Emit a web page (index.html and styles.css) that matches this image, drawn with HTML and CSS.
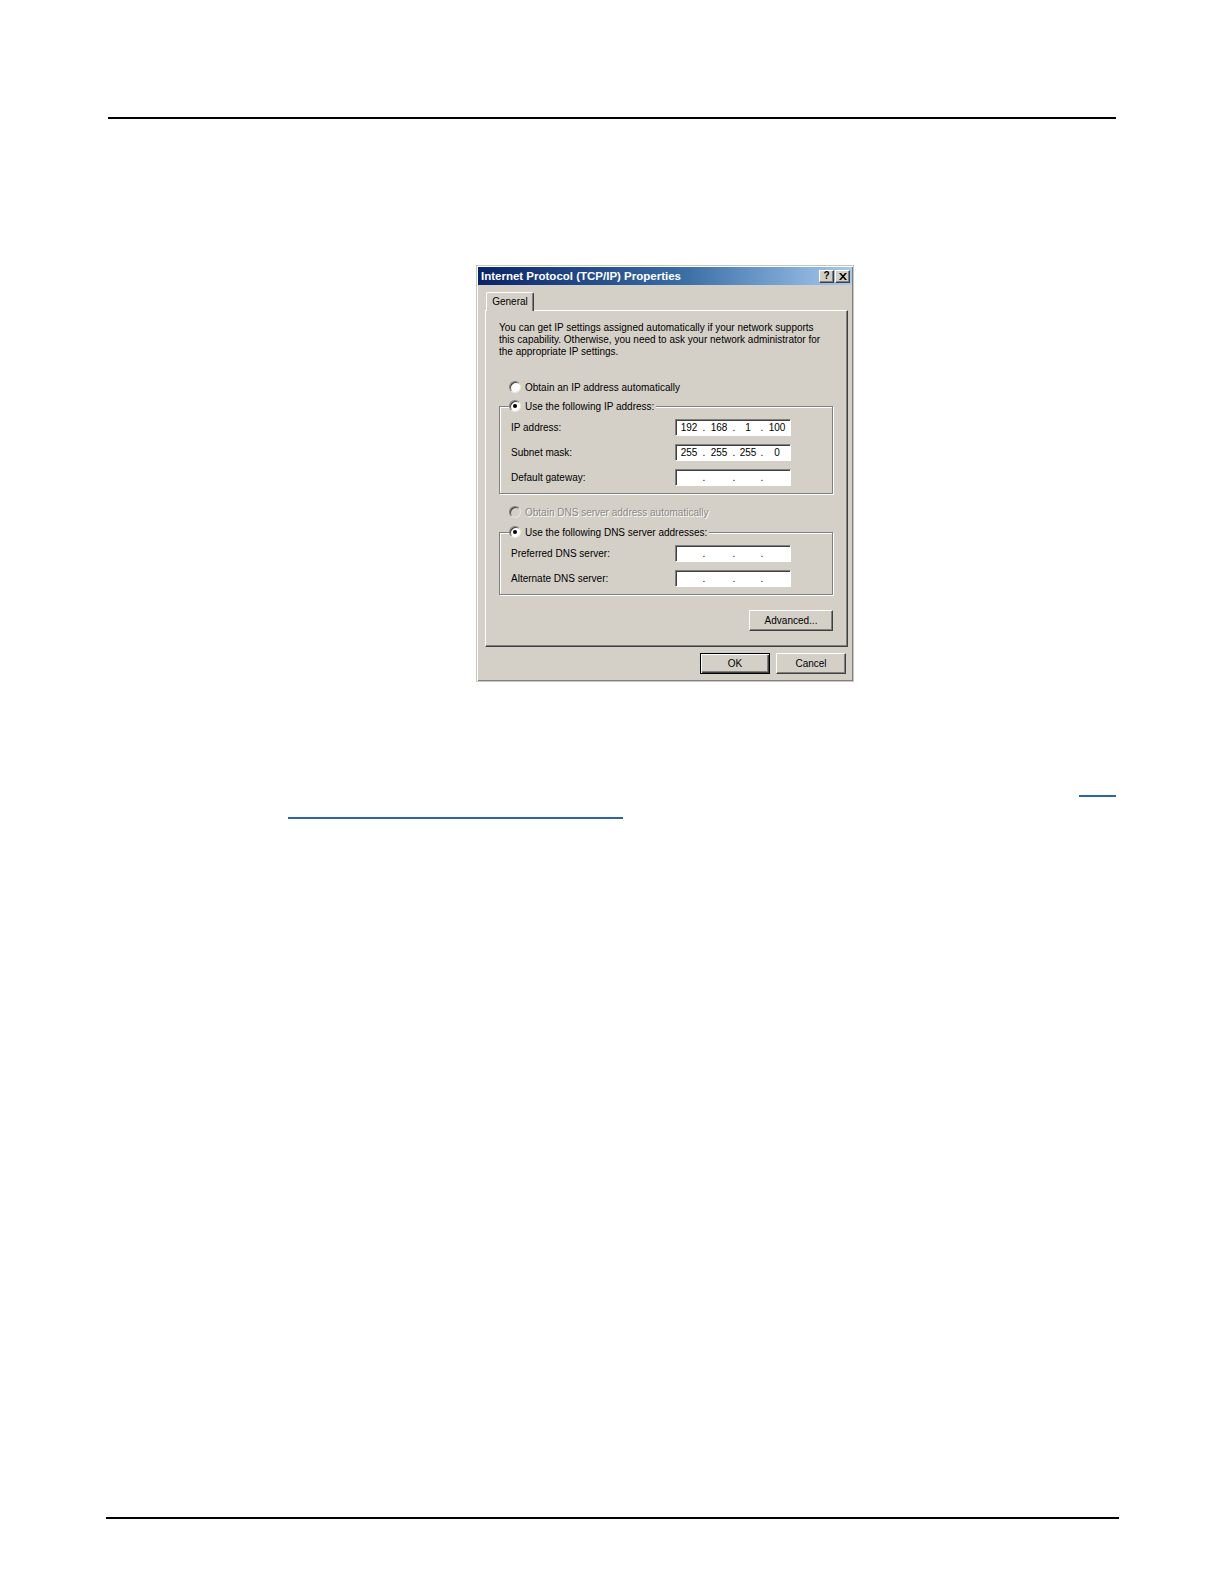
FILE: index.html
```html
<!DOCTYPE html>
<html>
<head>
<meta charset="utf-8">
<title>Internet Protocol (TCP/IP) Properties</title>
<link rel="stylesheet" href="styles.css">
</head>
<body>
<div class="page">
  <div class="rule top-rule"></div>

  <div class="dialog">
    <div class="titlebar">
      <span class="title">Internet Protocol (TCP/IP) Properties</span>
      <div class="tbtns">
        <span class="tbtn help">?</span>
        <span class="tbtn close"><svg width="8" height="7" viewBox="0 0 8 7"><path d="M0 0h2l2 2.2L6 0h2L5 3.5 8 7H6L4 4.8 2 7H0l3-3.5z" fill="#000"/></svg></span>
      </div>
    </div>
    <div class="dbody">
      <div class="tabs"><div class="tab">General</div></div>
      <div class="panel">
        <p class="intro">You can get IP settings assigned automatically if your network supports<br>this capability. Otherwise, you need to ask your network administrator for<br>the appropriate IP settings.</p>

        <div class="radio-row r1"><span class="radio"></span><span class="rlabel">Obtain an IP address automatically</span></div>

        <fieldset class="group g1">
          <legend><span class="radio checked"></span><span class="rlabel">Use the following IP address:</span></legend>
          <div class="field-row">
            <span class="flabel">IP address:</span>
            <div class="ipbox"><span class="seg">192</span><span class="dot">.</span><span class="seg">168</span><span class="dot">.</span><span class="seg">1</span><span class="dot">.</span><span class="seg">100</span></div>
          </div>
          <div class="field-row">
            <span class="flabel">Subnet mask:</span>
            <div class="ipbox"><span class="seg">255</span><span class="dot">.</span><span class="seg">255</span><span class="dot">.</span><span class="seg">255</span><span class="dot">.</span><span class="seg">0</span></div>
          </div>
          <div class="field-row">
            <span class="flabel">Default gateway:</span>
            <div class="ipbox"><span class="seg"></span><span class="dot">.</span><span class="seg"></span><span class="dot">.</span><span class="seg"></span><span class="dot">.</span><span class="seg"></span></div>
          </div>
        </fieldset>

        <div class="radio-row r3 disabled"><span class="radio"></span><span class="rlabel">Obtain DNS server address automatically</span></div>

        <fieldset class="group g2">
          <legend><span class="radio checked"></span><span class="rlabel">Use the following DNS server addresses:</span></legend>
          <div class="field-row">
            <span class="flabel">Preferred DNS server:</span>
            <div class="ipbox"><span class="seg"></span><span class="dot">.</span><span class="seg"></span><span class="dot">.</span><span class="seg"></span><span class="dot">.</span><span class="seg"></span></div>
          </div>
          <div class="field-row">
            <span class="flabel">Alternate DNS server:</span>
            <div class="ipbox"><span class="seg"></span><span class="dot">.</span><span class="seg"></span><span class="dot">.</span><span class="seg"></span><span class="dot">.</span><span class="seg"></span></div>
          </div>
        </fieldset>

        <div class="adv-row"><span class="btn adv">Advanced...</span></div>
      </div>
      <div class="btn-row">
        <span class="btn default">OK</span>
        <span class="btn">Cancel</span>
      </div>
    </div>
  </div>

  <div class="link-line l1"></div>
  <div class="link-line l2"></div>

  <div class="rule bottom-rule"></div>
</div>
</body>
</html>
```

FILE: styles.css
```css
html, body {
  margin: 0;
  padding: 0;
  background: #fff;
}

.page {
  padding-top: 117px;
  font-family: "Liberation Sans", Arial, sans-serif;
}

.rule {
  background: #000;
  height: 2px;
}

.top-rule {
  margin-left: 108px;
  width: 1008px;
}

.bottom-rule {
  margin-top: 698px;
  margin-left: 106px;
  width: 1013px;
}

.link-line {
  height: 2px;
  background: #2b65a3;
}

.l1 {
  margin-top: 113px;
  margin-left: 1079px;
  width: 37px;
}

.l2 {
  margin-top: 20px;
  margin-left: 288px;
  width: 335px;
}

/* ---------- dialog ---------- */
.dialog {
  margin-top: 146px;
  margin-left: 476px;
  width: 378px;
  height: 417px;
  box-sizing: border-box;
  background: #d4d0c8;
  border: 1px solid #c9c6bf;
  box-shadow: inset 1px 1px 0 #fff, inset -1px -1px 0 #808080;
  color: #000;
  font-size: 10px;
}

.titlebar {
  margin: 1px 1px 0;
  height: 18px;
  background: linear-gradient(to right, #0a246a 0%, #3a6ea5 55%, #a6caf0 100%);
  display: flex;
  align-items: center;
  justify-content: space-between;
  padding: 0 2px 0 3px;
}

.title {
  color: #fff;
  font-weight: bold;
  font-size: 11.5px;
  white-space: nowrap;
}

.tbtns {
  display: flex;
  gap: 1px;
}

.tbtn {
  width: 15px;
  height: 13px;
  background: #d4d0c8;
  box-sizing: border-box;
  border: 1px solid;
  border-color: #fff #404040 #404040 #fff;
  box-shadow: inset -1px -1px 0 #808080;
  display: flex;
  align-items: center;
  justify-content: center;
  font-weight: bold;
  font-size: 10px;
  line-height: 1;
}

.dbody {
  padding: 7px 5px 0 8px;
}

.tabs {
  display: flex;
  position: relative;
  z-index: 1;
}

.tab {
  margin-left: 1px;
  width: 48px;
  height: 19px;
  margin-bottom: -1px;
  box-sizing: border-box;
  background: #d4d0c8;
  border-top: 1px solid #fff;
  border-left: 1px solid #fff;
  border-right: 1px solid #404040;
  box-shadow: inset -1px 0 0 #808080;
  border-radius: 2px 2px 0 0;
  display: flex;
  align-items: center;
  justify-content: center;
  padding-bottom: 2px;
}

.panel {
  width: 363px;
  height: 337px;
  box-sizing: border-box;
  border: 1px solid;
  border-color: #fff #404040 #404040 #fff;
  box-shadow: inset -1px -1px 0 #808080;
  padding: 11px 14px 0 13px;
}

.intro {
  margin: 0;
  line-height: 12px;
  white-space: nowrap;
}

.radio-row {
  display: flex;
  align-items: center;
  height: 14px;
  padding-left: 10px;
}

.r1 { margin-top: 22px; }
.r3 { margin-top: 11px; }

.radio {
  width: 12px;
  height: 12px;
  box-sizing: border-box;
  border-radius: 50%;
  background: #fff;
  border: 1px solid;
  border-color: #808080 #e8e6e2 #e8e6e2 #808080;
  box-shadow: inset 1px 1px 0 #404040;
  margin-right: 4px;
  flex: none;
  display: flex;
  align-items: center;
  justify-content: center;
}

.radio.checked::after {
  content: "";
  width: 4px;
  height: 4px;
  border-radius: 50%;
  background: #000;
}

.rlabel {
  white-space: nowrap;
}

.disabled .radio {
  background: #d4d0c8;
}

.disabled .rlabel {
  color: #8a8883;
  text-shadow: 1px 1px 0 #fff;
}

.group {
  margin: 0;
  padding: 6px 0 7px 0;
  border: 1px solid #808080;
  box-shadow: inset 1px 1px 0 #fff, 1px 1px 0 #fff;
  display: flex;
  flex-direction: column;
  gap: 8px;
  min-width: 0;
}

.g1 { margin-top: 5px; }
.g2 { margin-top: 6px; }

.group legend {
  margin-left: 9px;
  padding: 0 2px 0 0;
  height: 14px;
  display: flex;
  align-items: center;
  background: #d4d0c8;
}

.field-row {
  display: flex;
  align-items: center;
  height: 17px;
  padding-left: 11px;
}

.flabel {
  width: 164px;
  flex: none;
  white-space: nowrap;
}

.ipbox {
  width: 116px;
  height: 17px;
  box-sizing: border-box;
  background: #fff;
  border: 1px solid;
  border-color: #808080 #fff #fff #808080;
  box-shadow: inset 1px 1px 0 #404040;
  padding: 1px 1px 0 1px;
  display: grid;
  grid-template-columns: 24px 6px 24px 6px 22px 6px 24px;
  align-items: center;
  justify-items: center;
  line-height: 1;
}

.adv-row {
  margin-top: 15px;
  display: flex;
  justify-content: flex-end;
}

.btn {
  height: 21px;
  box-sizing: border-box;
  background: #d4d0c8;
  border: 1px solid;
  border-color: #fff #404040 #404040 #fff;
  box-shadow: inset -1px -1px 0 #808080;
  display: flex;
  align-items: center;
  justify-content: center;
  width: 70px;
}

.adv {
  width: 84px;
}

.btn-row {
  margin-top: 6px;
  display: flex;
  justify-content: flex-end;
  gap: 6px;
  width: 363px;
  padding-right: 2px;
  box-sizing: border-box;
}

.btn.default {
  border: 1px solid #000;
  box-shadow: inset 1px 1px 0 #fff, inset -1px -1px 0 #404040, inset -2px -2px 0 #808080;
}
```
